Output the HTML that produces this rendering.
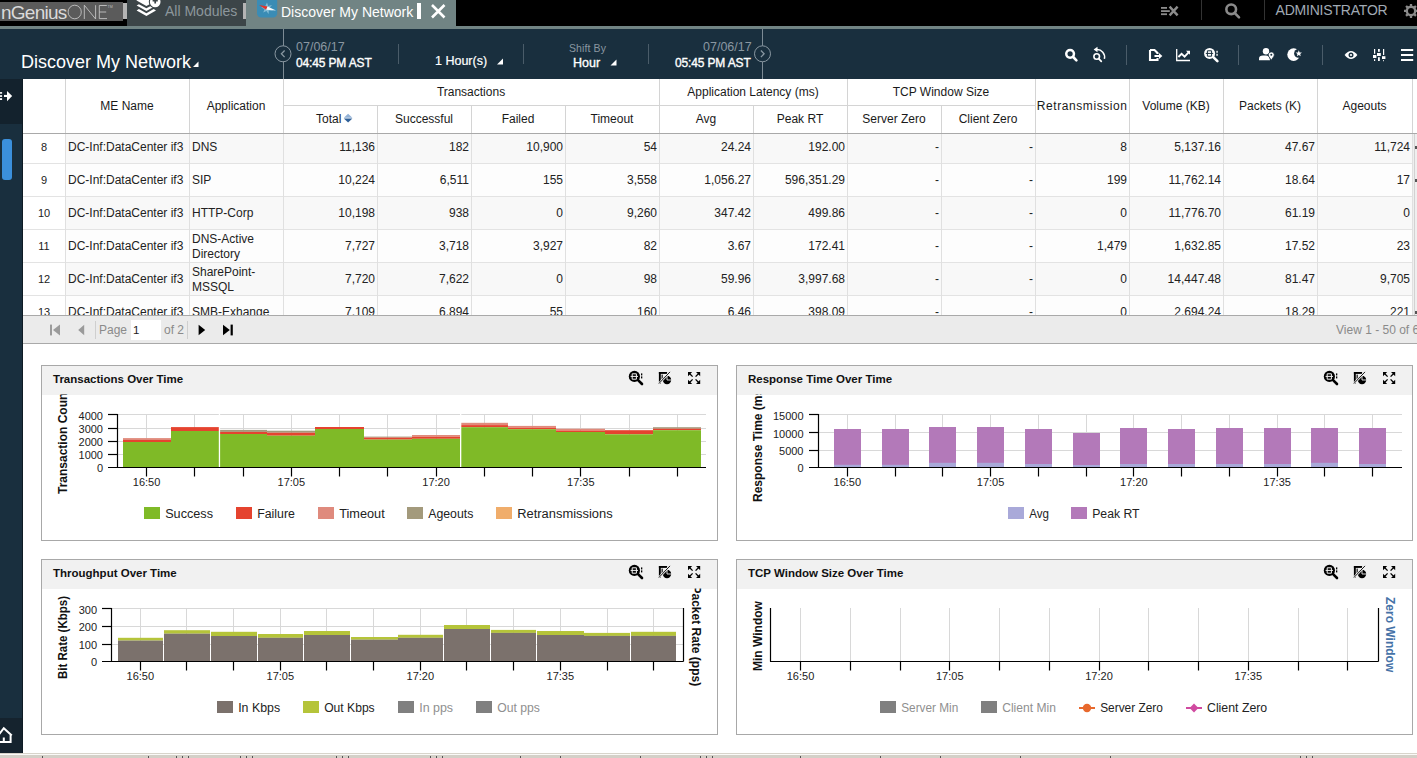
<!DOCTYPE html>
<html><head><meta charset="utf-8"><title>Discover My Network</title><style>
*{box-sizing:border-box}
html,body{margin:0;padding:0}
body{width:1417px;height:758px;overflow:hidden;position:relative;background:#fff;font-family:"Liberation Sans",sans-serif;color:#222}
.a{position:absolute;white-space:nowrap}
.w{color:#fff}
.panel{position:absolute;border:1px solid #a8a8a8;background:#fff}
.ph{position:absolute;left:0;top:0;right:0;height:29px;background:#f1f1f1}
.pt{position:absolute;left:11px;top:7px;font-size:11.5px;font-weight:bold;color:#111;white-space:nowrap}
svg{position:absolute;left:0;top:0;overflow:visible}
</style></head><body>
<div class="a" style="left:0px;top:0px;width:1417px;height:26px;background:#000;"></div>
<div class="a" style="left:0px;top:26px;width:1417px;height:3px;background:#718484;"></div>
<div class="a" style="left:0px;top:29px;width:1417px;height:50px;background:#192f3e;"></div>
<div class="a" style="left:0px;top:2px;width:123px;height:19px;background:#5b5b5b;"></div>
<div class="a" style="left:1px;top:2px;font-size:19px;color:#dadada;letter-spacing:-0.75px">nGenius</div>
<div class="a" style="left:123px;top:3px;width:4px;height:16px;background:#b4b4b4;"></div>
<div class="a" style="left:127px;top:0px;width:119px;height:26px;background:#3c4548;"></div>
<div class="a" style="left:165px;top:3px;font-size:14px;color:#8d979c;">All Modules</div>
<div class="a" style="left:243px;top:3px;width:4px;height:16px;background:#b4b4b4;"></div>
<div class="a" style="left:246px;top:0px;width:210px;height:26px;background:#718484;"></div>
<div class="a" style="left:281px;top:4px;font-size:14px;color:#fff;">Discover My Network</div>
<div class="a" style="left:417px;top:3px;width:4px;height:16px;background:#fff;"></div>
<div class="a" style="left:1201px;top:0px;width:1px;height:20px;background:#333;"></div>
<div class="a" style="left:1264px;top:0px;width:1px;height:20px;background:#333;"></div>
<div class="a" style="left:1275.5px;top:1.8px;font-size:14px;color:#a0aab4;letter-spacing:-0.2px">ADMINISTRATOR</div>
<div class="a" style="left:21px;top:51.7px;font-size:18px;color:#fff;">Discover My Network</div>
<div class="a" style="left:283px;top:29px;width:1px;height:50px;background:#7d8b95;"></div>
<div class="a" style="left:762px;top:29px;width:1px;height:50px;background:#7d8b95;"></div>
<div class="a" style="left:296px;top:40px;font-size:12.5px;color:#8a97a1;">07/06/17</div>
<div class="a" style="left:296px;top:55.5px;font-size:12px;color:#fff;-webkit-text-stroke:0.35px #fff;letter-spacing:-0.15px">04:45 PM AST</div>
<div class="a" style="left:398px;top:44px;width:1px;height:20px;background:#4a5c69;"></div>
<div class="a" style="left:435px;top:53.5px;font-size:12.5px;color:#fff;-webkit-text-stroke:0.2px #fff">1 Hour(s)</div>
<div class="a" style="left:523px;top:44px;width:1px;height:20px;background:#4a5c69;"></div>
<div class="a" style="left:569px;top:41.5px;font-size:10.5px;color:#8a97a1;letter-spacing:0.1px">Shift By</div>
<div class="a" style="left:573px;top:55.5px;font-size:12.5px;color:#fff;-webkit-text-stroke:0.35px #fff">Hour</div>
<div class="a" style="left:648px;top:44px;width:1px;height:20px;background:#4a5c69;"></div>
<div class="a" style="left:703px;top:40px;font-size:12.5px;color:#8a97a1;">07/06/17</div>
<div class="a" style="left:675px;top:55.5px;font-size:12px;color:#fff;-webkit-text-stroke:0.35px #fff;letter-spacing:-0.15px">05:45 PM AST</div>
<div class="a" style="left:1126px;top:45px;width:1px;height:20px;background:#4a5c69;"></div>
<div class="a" style="left:1238px;top:45px;width:1px;height:20px;background:#4a5c69;"></div>
<div class="a" style="left:1322px;top:45px;width:1px;height:20px;background:#4a5c69;"></div>
<div class="a" style="left:0px;top:79px;width:23px;height:674px;background:#192f3e;"></div>
<div class="a" style="left:0px;top:79px;width:23px;height:45px;background:#13222d;"></div>
<div class="a" style="left:2px;top:139px;width:10px;height:41px;background:#3b90dc;border-radius:3px"></div>
<div class="a" style="left:0px;top:718px;width:23px;height:35px;background:#15232e;"></div>
<div class="a" style="left:22px;top:79px;width:1px;height:674px;background:#0e1b24;"></div>
<div class="a" style="left:23px;top:79px;width:1394px;height:236px;background:#fff;"></div>
<div class="a" style="left:23px;top:133px;width:1394px;height:182px;overflow:hidden">
<div class="a" style="left:42px;top:-2px;width:1352px;height:33px;background:#f8f8f8"></div>
<div class="a" style="left:0;top:30px;width:1389px;height:1px;background:#e3e3e3"></div>
<div class="a" style="left:0;top:7.7px;width:42px;text-align:center;font-size:11px;color:#222">8</div>
<div class="a" style="left:45px;top:7.0px;font-size:12px;color:#222">DC-Inf:DataCenter if3</div>
<div class="a" style="left:169px;top:7.0px;font-size:12px;color:#222">DNS</div>
<div class="a" style="right:1042px;top:7.0px;font-size:12px;color:#222">11,136</div>
<div class="a" style="right:948px;top:7.0px;font-size:12px;color:#222">182</div>
<div class="a" style="right:854px;top:7.0px;font-size:12px;color:#222">10,900</div>
<div class="a" style="right:760px;top:7.0px;font-size:12px;color:#222">54</div>
<div class="a" style="right:666px;top:7.0px;font-size:12px;color:#222">24.24</div>
<div class="a" style="right:572px;top:7.0px;font-size:12px;color:#222">192.00</div>
<div class="a" style="right:478px;top:7.0px;font-size:12px;color:#222">-</div>
<div class="a" style="right:384px;top:7.0px;font-size:12px;color:#222">-</div>
<div class="a" style="right:290px;top:7.0px;font-size:12px;color:#222">8</div>
<div class="a" style="right:196px;top:7.0px;font-size:12px;color:#222">5,137.16</div>
<div class="a" style="right:102px;top:7.0px;font-size:12px;color:#222">47.67</div>
<div class="a" style="right:7px;top:7.0px;font-size:12px;color:#222">11,724</div>
<div class="a" style="left:42px;top:31px;width:1352px;height:33px;background:#fdfdfd"></div>
<div class="a" style="left:0;top:63px;width:1389px;height:1px;background:#e3e3e3"></div>
<div class="a" style="left:0;top:40.7px;width:42px;text-align:center;font-size:11px;color:#222">9</div>
<div class="a" style="left:45px;top:40.0px;font-size:12px;color:#222">DC-Inf:DataCenter if3</div>
<div class="a" style="left:169px;top:40.0px;font-size:12px;color:#222">SIP</div>
<div class="a" style="right:1042px;top:40.0px;font-size:12px;color:#222">10,224</div>
<div class="a" style="right:948px;top:40.0px;font-size:12px;color:#222">6,511</div>
<div class="a" style="right:854px;top:40.0px;font-size:12px;color:#222">155</div>
<div class="a" style="right:760px;top:40.0px;font-size:12px;color:#222">3,558</div>
<div class="a" style="right:666px;top:40.0px;font-size:12px;color:#222">1,056.27</div>
<div class="a" style="right:572px;top:40.0px;font-size:12px;color:#222">596,351.29</div>
<div class="a" style="right:478px;top:40.0px;font-size:12px;color:#222">-</div>
<div class="a" style="right:384px;top:40.0px;font-size:12px;color:#222">-</div>
<div class="a" style="right:290px;top:40.0px;font-size:12px;color:#222">199</div>
<div class="a" style="right:196px;top:40.0px;font-size:12px;color:#222">11,762.14</div>
<div class="a" style="right:102px;top:40.0px;font-size:12px;color:#222">18.64</div>
<div class="a" style="right:7px;top:40.0px;font-size:12px;color:#222">17</div>
<div class="a" style="left:42px;top:64px;width:1352px;height:33px;background:#f8f8f8"></div>
<div class="a" style="left:0;top:96px;width:1389px;height:1px;background:#e3e3e3"></div>
<div class="a" style="left:0;top:73.7px;width:42px;text-align:center;font-size:11px;color:#222">10</div>
<div class="a" style="left:45px;top:73.0px;font-size:12px;color:#222">DC-Inf:DataCenter if3</div>
<div class="a" style="left:169px;top:73.0px;font-size:12px;color:#222">HTTP-Corp</div>
<div class="a" style="right:1042px;top:73.0px;font-size:12px;color:#222">10,198</div>
<div class="a" style="right:948px;top:73.0px;font-size:12px;color:#222">938</div>
<div class="a" style="right:854px;top:73.0px;font-size:12px;color:#222">0</div>
<div class="a" style="right:760px;top:73.0px;font-size:12px;color:#222">9,260</div>
<div class="a" style="right:666px;top:73.0px;font-size:12px;color:#222">347.42</div>
<div class="a" style="right:572px;top:73.0px;font-size:12px;color:#222">499.86</div>
<div class="a" style="right:478px;top:73.0px;font-size:12px;color:#222">-</div>
<div class="a" style="right:384px;top:73.0px;font-size:12px;color:#222">-</div>
<div class="a" style="right:290px;top:73.0px;font-size:12px;color:#222">0</div>
<div class="a" style="right:196px;top:73.0px;font-size:12px;color:#222">11,776.70</div>
<div class="a" style="right:102px;top:73.0px;font-size:12px;color:#222">61.19</div>
<div class="a" style="right:7px;top:73.0px;font-size:12px;color:#222">0</div>
<div class="a" style="left:42px;top:97px;width:1352px;height:33px;background:#fdfdfd"></div>
<div class="a" style="left:0;top:129px;width:1389px;height:1px;background:#e3e3e3"></div>
<div class="a" style="left:0;top:106.7px;width:42px;text-align:center;font-size:11px;color:#222">11</div>
<div class="a" style="left:45px;top:106.0px;font-size:12px;color:#222">DC-Inf:DataCenter if3</div>
<div class="a" style="left:169px;top:98.5px;font-size:12px;line-height:15px;color:#222">DNS-Active<br>Directory</div>
<div class="a" style="right:1042px;top:106.0px;font-size:12px;color:#222">7,727</div>
<div class="a" style="right:948px;top:106.0px;font-size:12px;color:#222">3,718</div>
<div class="a" style="right:854px;top:106.0px;font-size:12px;color:#222">3,927</div>
<div class="a" style="right:760px;top:106.0px;font-size:12px;color:#222">82</div>
<div class="a" style="right:666px;top:106.0px;font-size:12px;color:#222">3.67</div>
<div class="a" style="right:572px;top:106.0px;font-size:12px;color:#222">172.41</div>
<div class="a" style="right:478px;top:106.0px;font-size:12px;color:#222">-</div>
<div class="a" style="right:384px;top:106.0px;font-size:12px;color:#222">-</div>
<div class="a" style="right:290px;top:106.0px;font-size:12px;color:#222">1,479</div>
<div class="a" style="right:196px;top:106.0px;font-size:12px;color:#222">1,632.85</div>
<div class="a" style="right:102px;top:106.0px;font-size:12px;color:#222">17.52</div>
<div class="a" style="right:7px;top:106.0px;font-size:12px;color:#222">23</div>
<div class="a" style="left:42px;top:130px;width:1352px;height:33px;background:#f8f8f8"></div>
<div class="a" style="left:0;top:162px;width:1389px;height:1px;background:#e3e3e3"></div>
<div class="a" style="left:0;top:139.7px;width:42px;text-align:center;font-size:11px;color:#222">12</div>
<div class="a" style="left:45px;top:139.0px;font-size:12px;color:#222">DC-Inf:DataCenter if3</div>
<div class="a" style="left:169px;top:131.5px;font-size:12px;line-height:15px;color:#222">SharePoint-<br>MSSQL</div>
<div class="a" style="right:1042px;top:139.0px;font-size:12px;color:#222">7,720</div>
<div class="a" style="right:948px;top:139.0px;font-size:12px;color:#222">7,622</div>
<div class="a" style="right:854px;top:139.0px;font-size:12px;color:#222">0</div>
<div class="a" style="right:760px;top:139.0px;font-size:12px;color:#222">98</div>
<div class="a" style="right:666px;top:139.0px;font-size:12px;color:#222">59.96</div>
<div class="a" style="right:572px;top:139.0px;font-size:12px;color:#222">3,997.68</div>
<div class="a" style="right:478px;top:139.0px;font-size:12px;color:#222">-</div>
<div class="a" style="right:384px;top:139.0px;font-size:12px;color:#222">-</div>
<div class="a" style="right:290px;top:139.0px;font-size:12px;color:#222">0</div>
<div class="a" style="right:196px;top:139.0px;font-size:12px;color:#222">14,447.48</div>
<div class="a" style="right:102px;top:139.0px;font-size:12px;color:#222">81.47</div>
<div class="a" style="right:7px;top:139.0px;font-size:12px;color:#222">9,705</div>
<div class="a" style="left:42px;top:163px;width:1352px;height:33px;background:#fdfdfd"></div>
<div class="a" style="left:0;top:195px;width:1389px;height:1px;background:#e3e3e3"></div>
<div class="a" style="left:0;top:172.7px;width:42px;text-align:center;font-size:11px;color:#222">13</div>
<div class="a" style="left:45px;top:172.0px;font-size:12px;color:#222">DC-Inf:DataCenter if3</div>
<div class="a" style="left:169px;top:172.0px;font-size:12px;color:#222">SMB-Exhange</div>
<div class="a" style="right:1042px;top:172.0px;font-size:12px;color:#222">7,109</div>
<div class="a" style="right:948px;top:172.0px;font-size:12px;color:#222">6,894</div>
<div class="a" style="right:854px;top:172.0px;font-size:12px;color:#222">55</div>
<div class="a" style="right:760px;top:172.0px;font-size:12px;color:#222">160</div>
<div class="a" style="right:666px;top:172.0px;font-size:12px;color:#222">6.46</div>
<div class="a" style="right:572px;top:172.0px;font-size:12px;color:#222">398.09</div>
<div class="a" style="right:478px;top:172.0px;font-size:12px;color:#222">-</div>
<div class="a" style="right:384px;top:172.0px;font-size:12px;color:#222">-</div>
<div class="a" style="right:290px;top:172.0px;font-size:12px;color:#222">0</div>
<div class="a" style="right:196px;top:172.0px;font-size:12px;color:#222">2,694.24</div>
<div class="a" style="right:102px;top:172.0px;font-size:12px;color:#222">18.29</div>
<div class="a" style="right:7px;top:172.0px;font-size:12px;color:#222">221</div>
</div>
<div class="a" style="left:65px;top:133px;width:1px;height:182px;background:#e0e0e0;"></div>
<div class="a" style="left:189px;top:133px;width:1px;height:182px;background:#e0e0e0;"></div>
<div class="a" style="left:283px;top:133px;width:1px;height:182px;background:#e0e0e0;"></div>
<div class="a" style="left:377px;top:133px;width:1px;height:182px;background:#e0e0e0;"></div>
<div class="a" style="left:471px;top:133px;width:1px;height:182px;background:#e0e0e0;"></div>
<div class="a" style="left:565px;top:133px;width:1px;height:182px;background:#e0e0e0;"></div>
<div class="a" style="left:659px;top:133px;width:1px;height:182px;background:#e0e0e0;"></div>
<div class="a" style="left:753px;top:133px;width:1px;height:182px;background:#e0e0e0;"></div>
<div class="a" style="left:847px;top:133px;width:1px;height:182px;background:#e0e0e0;"></div>
<div class="a" style="left:941px;top:133px;width:1px;height:182px;background:#e0e0e0;"></div>
<div class="a" style="left:1035px;top:133px;width:1px;height:182px;background:#e0e0e0;"></div>
<div class="a" style="left:1129px;top:133px;width:1px;height:182px;background:#e0e0e0;"></div>
<div class="a" style="left:1223px;top:133px;width:1px;height:182px;background:#e0e0e0;"></div>
<div class="a" style="left:1317px;top:133px;width:1px;height:182px;background:#e0e0e0;"></div>
<div class="a" style="left:1412px;top:133px;width:1px;height:182px;background:#e0e0e0;"></div>
<div class="a" style="left:65px;top:79px;width:1px;height:54px;background:#d4d4d4;"></div>
<div class="a" style="left:189px;top:79px;width:1px;height:54px;background:#d4d4d4;"></div>
<div class="a" style="left:283px;top:79px;width:1px;height:54px;background:#d4d4d4;"></div>
<div class="a" style="left:1035px;top:79px;width:1px;height:54px;background:#d4d4d4;"></div>
<div class="a" style="left:1129px;top:79px;width:1px;height:54px;background:#d4d4d4;"></div>
<div class="a" style="left:1223px;top:79px;width:1px;height:54px;background:#d4d4d4;"></div>
<div class="a" style="left:1317px;top:79px;width:1px;height:54px;background:#d4d4d4;"></div>
<div class="a" style="left:1412px;top:79px;width:1px;height:54px;background:#d4d4d4;"></div>
<div class="a" style="left:377px;top:105px;width:1px;height:28px;background:#d4d4d4;"></div>
<div class="a" style="left:471px;top:105px;width:1px;height:28px;background:#d4d4d4;"></div>
<div class="a" style="left:565px;top:105px;width:1px;height:28px;background:#d4d4d4;"></div>
<div class="a" style="left:753px;top:105px;width:1px;height:28px;background:#d4d4d4;"></div>
<div class="a" style="left:941px;top:105px;width:1px;height:28px;background:#d4d4d4;"></div>
<div class="a" style="left:659px;top:79px;width:1px;height:54px;background:#d4d4d4;"></div>
<div class="a" style="left:847px;top:79px;width:1px;height:54px;background:#d4d4d4;"></div>
<div class="a" style="left:283px;top:105px;width:752px;height:1px;background:#d4d4d4;"></div>
<div class="a" style="left:23px;top:133px;width:1394px;height:1px;background:#a9a9a9;"></div>
<div class="a" style="left:65px;top:98.5px;width:124px;text-align:center;font-size:12px;color:#1a1a1a">ME Name</div>
<div class="a" style="left:189px;top:98.5px;width:94px;text-align:center;font-size:12px;color:#1a1a1a">Application</div>
<div class="a" style="left:283px;top:84.5px;width:376px;text-align:center;font-size:12px;color:#1a1a1a">Transactions</div>
<div class="a" style="left:659px;top:84.5px;width:188px;text-align:center;font-size:12px;color:#1a1a1a">Application Latency (ms)</div>
<div class="a" style="left:847px;top:84.5px;width:188px;text-align:center;font-size:12px;color:#1a1a1a">TCP Window Size</div>
<div class="a" style="left:316px;top:111.5px;font-size:12px;color:#1a1a1a">Total</div>
<div class="a" style="left:377px;top:111.5px;width:94px;text-align:center;font-size:12px;color:#1a1a1a">Successful</div>
<div class="a" style="left:471px;top:111.5px;width:94px;text-align:center;font-size:12px;color:#1a1a1a">Failed</div>
<div class="a" style="left:565px;top:111.5px;width:94px;text-align:center;font-size:12px;color:#1a1a1a">Timeout</div>
<div class="a" style="left:659px;top:111.5px;width:94px;text-align:center;font-size:12px;color:#1a1a1a">Avg</div>
<div class="a" style="left:753px;top:111.5px;width:94px;text-align:center;font-size:12px;color:#1a1a1a">Peak RT</div>
<div class="a" style="left:847px;top:111.5px;width:94px;text-align:center;font-size:12px;color:#1a1a1a">Server Zero</div>
<div class="a" style="left:941px;top:111.5px;width:94px;text-align:center;font-size:12px;color:#1a1a1a">Client Zero</div>
<div class="a" style="left:1036.8px;top:98.5px;font-size:12px;color:#1a1a1a;letter-spacing:0.58px">Retransmission</div>
<div class="a" style="left:1129px;top:98.5px;width:94px;text-align:center;font-size:12px;color:#1a1a1a">Volume (KB)</div>
<div class="a" style="left:1223px;top:98.5px;width:94px;text-align:center;font-size:12px;color:#1a1a1a">Packets (K)</div>
<div class="a" style="left:1317px;top:98.5px;width:95px;text-align:center;font-size:12px;color:#1a1a1a">Ageouts</div>
<div class="a" style="left:1413px;top:134px;width:4px;height:181px;background:#efefef;"></div>
<div class="a" style="left:1414px;top:134px;width:1px;height:181px;background:#d2d2d2;"></div>
<div class="a" style="left:1415px;top:146px;width:2px;height:3px;background:#555;"></div>
<div class="a" style="left:1415px;top:179px;width:2px;height:3px;background:#555;"></div>
<div class="a" style="left:1415px;top:311px;width:2px;height:3px;background:#555;"></div>
<div class="a" style="left:23px;top:315px;width:1394px;height:29px;background:#ebebeb;"></div>
<div class="a" style="left:23px;top:315px;width:1394px;height:1px;background:#a9a9a9;"></div>
<div class="a" style="left:23px;top:343px;width:1394px;height:1px;background:#a9a9a9;"></div>
<div class="a" style="left:95px;top:321px;width:1px;height:18px;background:#cfcfcf;"></div>
<div class="a" style="left:187px;top:321px;width:1px;height:18px;background:#cfcfcf;"></div>
<div class="a" style="left:99px;top:323px;font-size:12px;color:#8a8a8a;">Page</div>
<div class="a" style="left:131px;top:320px;width:30px;height:20px;background:#fff;"></div>
<div class="a" style="left:133px;top:324px;font-size:11.5px;color:#222;">1</div>
<div class="a" style="left:164px;top:323px;font-size:12px;color:#8a8a8a;">of 2</div>
<div class="a" style="left:1336px;top:323px;font-size:12px;color:#8a8a8a;">View 1 - 50 of 60</div>
<div class="panel" style="left:41px;top:365px;width:677px;height:176px"><div class="ph"></div><div class="pt">Transactions Over Time</div></div>
<div class="panel" style="left:736px;top:365px;width:677px;height:176px"><div class="ph"></div><div class="pt">Response Time Over Time</div></div>
<div class="panel" style="left:41px;top:559px;width:677px;height:176px"><div class="ph"></div><div class="pt">Throughput Over Time</div></div>
<div class="panel" style="left:736px;top:559px;width:677px;height:176px"><div class="ph"></div><div class="pt">TCP Window Size Over Time</div></div>
<div class="a" style="left:0px;top:753px;width:1417px;height:1px;background:#d8d4cb;"></div>
<div class="a" style="left:0px;top:754px;width:1417px;height:1px;background:#fbfaf8;"></div>
<div class="a" style="left:0px;top:755px;width:1417px;height:3px;background:#d4d0c8;"></div>
<div class="a" style="left:42px;top:756px;width:1px;height:2px;background:#555;"></div>
<div class="a" style="left:148px;top:756px;width:1px;height:2px;background:#555;"></div>
<div class="a" style="left:176px;top:756px;width:1px;height:2px;background:#555;"></div>
<div class="a" style="left:182px;top:756px;width:1px;height:2px;background:#555;"></div>
<div class="a" style="left:188px;top:756px;width:1px;height:2px;background:#555;"></div>
<div class="a" style="left:240px;top:756px;width:1px;height:2px;background:#555;"></div>
<div class="a" style="left:246px;top:756px;width:1px;height:2px;background:#555;"></div>
<div class="a" style="left:252px;top:756px;width:1px;height:2px;background:#555;"></div>
<div class="a" style="left:336px;top:756px;width:1px;height:2px;background:#555;"></div>
<div class="a" style="left:342px;top:756px;width:1px;height:2px;background:#555;"></div>
<div class="a" style="left:348px;top:756px;width:1px;height:2px;background:#555;"></div>
<div class="a" style="left:430px;top:756px;width:1px;height:2px;background:#555;"></div>
<div class="a" style="left:436px;top:756px;width:1px;height:2px;background:#555;"></div>
<div class="a" style="left:442px;top:756px;width:1px;height:2px;background:#555;"></div>
<div class="a" style="left:520px;top:756px;width:1px;height:2px;background:#555;"></div>
<div class="a" style="left:560px;top:756px;width:1px;height:2px;background:#555;"></div>
<div class="a" style="left:640px;top:756px;width:1px;height:2px;background:#555;"></div>
<div class="a" style="left:700px;top:756px;width:1px;height:2px;background:#555;"></div>
<div class="a" style="left:706px;top:756px;width:1px;height:2px;background:#555;"></div>
<div class="a" style="left:712px;top:756px;width:1px;height:2px;background:#555;"></div>
<div class="a" style="left:800px;top:756px;width:1px;height:2px;background:#555;"></div>
<div class="a" style="left:880px;top:756px;width:1px;height:2px;background:#555;"></div>
<div class="a" style="left:940px;top:756px;width:1px;height:2px;background:#555;"></div>
<div class="a" style="left:1020px;top:756px;width:1px;height:2px;background:#555;"></div>
<div class="a" style="left:1110px;top:756px;width:1px;height:2px;background:#555;"></div>
<div class="a" style="left:1300px;top:756px;width:1px;height:2px;background:#555;"></div>
<div class="a" style="left:1306px;top:756px;width:1px;height:2px;background:#555;"></div>
<div class="a" style="left:1312px;top:756px;width:1px;height:2px;background:#555;"></div>
<svg width="1417" height="758" viewBox="0 0 1417 758" style="font-family:'Liberation Sans',sans-serif">
<defs><clipPath id="c1"><rect x="0" y="394.5" width="1417" height="150"/></clipPath><clipPath id="c3"><rect x="0" y="588.5" width="1417" height="150"/></clipPath></defs>
<line x1="117" y1="414.5" x2="706" y2="414.5" stroke="#d8d8d8" stroke-width="1"/>
<line x1="117" y1="428.5" x2="706" y2="428.5" stroke="#d8d8d8" stroke-width="1"/>
<line x1="117" y1="441.5" x2="706" y2="441.5" stroke="#d8d8d8" stroke-width="1"/>
<line x1="117" y1="454.5" x2="706" y2="454.5" stroke="#d8d8d8" stroke-width="1"/>
<line x1="146.5" y1="414" x2="146.5" y2="467" stroke="#d8d8d8" stroke-width="1"/>
<line x1="194.5" y1="414" x2="194.5" y2="467" stroke="#d8d8d8" stroke-width="1"/>
<line x1="243.5" y1="414" x2="243.5" y2="467" stroke="#d8d8d8" stroke-width="1"/>
<line x1="291.5" y1="414" x2="291.5" y2="467" stroke="#d8d8d8" stroke-width="1"/>
<line x1="339.5" y1="414" x2="339.5" y2="467" stroke="#d8d8d8" stroke-width="1"/>
<line x1="387.5" y1="414" x2="387.5" y2="467" stroke="#d8d8d8" stroke-width="1"/>
<line x1="436.5" y1="414" x2="436.5" y2="467" stroke="#d8d8d8" stroke-width="1"/>
<line x1="484.5" y1="414" x2="484.5" y2="467" stroke="#d8d8d8" stroke-width="1"/>
<line x1="532.5" y1="414" x2="532.5" y2="467" stroke="#d8d8d8" stroke-width="1"/>
<line x1="580.5" y1="414" x2="580.5" y2="467" stroke="#d8d8d8" stroke-width="1"/>
<line x1="629.5" y1="414" x2="629.5" y2="467" stroke="#d8d8d8" stroke-width="1"/>
<line x1="677.5" y1="414" x2="677.5" y2="467" stroke="#d8d8d8" stroke-width="1"/>
<rect x="123" y="438.10" width="48" height="1.90" fill="#e08a7c"/>
<rect x="123" y="440.00" width="48" height="2.00" fill="#e5432f"/>
<rect x="123" y="442.00" width="48" height="25.00" fill="#7fba27"/>
<rect x="171" y="427.10" width="48" height="3.90" fill="#e5432f"/>
<rect x="171" y="431.00" width="48" height="36.00" fill="#7fba27"/>
<rect x="219" y="429.90" width="48" height="2.00" fill="#a39a7c"/>
<rect x="219" y="431.90" width="48" height="2.10" fill="#e5432f"/>
<rect x="219" y="434.00" width="48" height="33.00" fill="#7fba27"/>
<rect x="267" y="430.70" width="48" height="2.00" fill="#a39a7c"/>
<rect x="267" y="432.70" width="48" height="3.00" fill="#e5432f"/>
<rect x="267" y="435.70" width="48" height="31.30" fill="#7fba27"/>
<rect x="315" y="427.00" width="49" height="2.00" fill="#e5432f"/>
<rect x="315" y="429.00" width="49" height="38.00" fill="#7fba27"/>
<rect x="364" y="436.60" width="48" height="1.00" fill="#a39a7c"/>
<rect x="364" y="437.60" width="48" height="2.00" fill="#e5432f"/>
<rect x="364" y="439.60" width="48" height="27.40" fill="#7fba27"/>
<rect x="412" y="435.00" width="48" height="1.80" fill="#e08a7c"/>
<rect x="412" y="436.80" width="48" height="2.00" fill="#e5432f"/>
<rect x="412" y="438.80" width="48" height="28.20" fill="#7fba27"/>
<rect x="460" y="422.80" width="48" height="2.30" fill="#e08a7c"/>
<rect x="460" y="425.10" width="48" height="2.10" fill="#e5432f"/>
<rect x="460" y="427.20" width="48" height="39.80" fill="#7fba27"/>
<rect x="508" y="425.90" width="48" height="1.80" fill="#e08a7c"/>
<rect x="508" y="427.70" width="48" height="1.50" fill="#e5432f"/>
<rect x="508" y="429.20" width="48" height="37.80" fill="#7fba27"/>
<rect x="556" y="428.70" width="49" height="1.80" fill="#e08a7c"/>
<rect x="556" y="430.50" width="49" height="1.50" fill="#e5432f"/>
<rect x="556" y="432.00" width="49" height="35.00" fill="#7fba27"/>
<rect x="605" y="430.20" width="48" height="4.10" fill="#e5432f"/>
<rect x="605" y="434.30" width="48" height="32.70" fill="#7fba27"/>
<rect x="653" y="427.20" width="48" height="1.50" fill="#a39a7c"/>
<rect x="653" y="428.70" width="48" height="1.50" fill="#e5432f"/>
<rect x="653" y="430.20" width="48" height="36.80" fill="#7fba27"/>
<rect x="218.80" y="414.00" width="1.30" height="53.00" fill="#fff"/>
<rect x="460.00" y="414.00" width="1.30" height="53.00" fill="#fff"/>
<line x1="117.5" y1="414" x2="117.5" y2="467.5" stroke="#000" stroke-width="1.2"/>
<line x1="108" y1="467.5" x2="706" y2="467.5" stroke="#000" stroke-width="1.2"/>
<line x1="108" y1="414.5" x2="117.5" y2="414.5" stroke="#000" stroke-width="1.2"/>
<line x1="108" y1="428.5" x2="117.5" y2="428.5" stroke="#000" stroke-width="1.2"/>
<line x1="108" y1="441.5" x2="117.5" y2="441.5" stroke="#000" stroke-width="1.2"/>
<line x1="108" y1="454.5" x2="117.5" y2="454.5" stroke="#000" stroke-width="1.2"/>
<line x1="146.5" y1="467" x2="146.5" y2="476.5" stroke="#000" stroke-width="1.2"/>
<line x1="194.5" y1="467" x2="194.5" y2="476.5" stroke="#000" stroke-width="1.2"/>
<line x1="243.5" y1="467" x2="243.5" y2="476.5" stroke="#000" stroke-width="1.2"/>
<line x1="291.5" y1="467" x2="291.5" y2="476.5" stroke="#000" stroke-width="1.2"/>
<line x1="339.5" y1="467" x2="339.5" y2="476.5" stroke="#000" stroke-width="1.2"/>
<line x1="387.5" y1="467" x2="387.5" y2="476.5" stroke="#000" stroke-width="1.2"/>
<line x1="436.5" y1="467" x2="436.5" y2="476.5" stroke="#000" stroke-width="1.2"/>
<line x1="484.5" y1="467" x2="484.5" y2="476.5" stroke="#000" stroke-width="1.2"/>
<line x1="532.5" y1="467" x2="532.5" y2="476.5" stroke="#000" stroke-width="1.2"/>
<line x1="580.5" y1="467" x2="580.5" y2="476.5" stroke="#000" stroke-width="1.2"/>
<line x1="629.5" y1="467" x2="629.5" y2="476.5" stroke="#000" stroke-width="1.2"/>
<line x1="677.5" y1="467" x2="677.5" y2="476.5" stroke="#000" stroke-width="1.2"/>
<text x="103" y="420" font-size="11" text-anchor="end" fill="#222" >4000</text>
<text x="103" y="433" font-size="11" text-anchor="end" fill="#222" >3000</text>
<text x="103" y="446" font-size="11" text-anchor="end" fill="#222" >2000</text>
<text x="103" y="459" font-size="11" text-anchor="end" fill="#222" >1000</text>
<text x="103" y="471.5" font-size="11" text-anchor="end" fill="#222" >0</text>
<text x="146.6" y="486" font-size="11" text-anchor="middle" fill="#222" >16:50</text>
<text x="291.35" y="486" font-size="11" text-anchor="middle" fill="#222" >17:05</text>
<text x="436.1" y="486" font-size="11" text-anchor="middle" fill="#222" >17:20</text>
<text x="580.85" y="486" font-size="11" text-anchor="middle" fill="#222" >17:35</text>
<g clip-path="url(#c1)"><text transform="translate(66.5,494) rotate(-90)" font-size="12" font-weight="bold" fill="#111">Transaction Count</text></g>
<rect x="144.00" y="507.00" width="16.00" height="12.00" fill="#7fba27"/>
<text x="165.2" y="518" font-size="12.5" text-anchor="start" fill="#222" textLength="47.8" lengthAdjust="spacingAndGlyphs">Success</text>
<rect x="236.00" y="507.00" width="16.00" height="12.00" fill="#e5432f"/>
<text x="257.2" y="518" font-size="12.5" text-anchor="start" fill="#222" textLength="37.699999999999996" lengthAdjust="spacingAndGlyphs">Failure</text>
<rect x="318.00" y="507.00" width="16.00" height="12.00" fill="#df8a7d"/>
<text x="339.2" y="518" font-size="12.5" text-anchor="start" fill="#222" textLength="45.5" lengthAdjust="spacingAndGlyphs">Timeout</text>
<rect x="407.00" y="507.00" width="16.00" height="12.00" fill="#a39a7c"/>
<text x="428.2" y="518" font-size="12.5" text-anchor="start" fill="#222" textLength="45.1" lengthAdjust="spacingAndGlyphs">Ageouts</text>
<rect x="496.00" y="507.00" width="16.00" height="12.00" fill="#f0ad6b"/>
<text x="517.2" y="518" font-size="12.5" text-anchor="start" fill="#222" textLength="95.4" lengthAdjust="spacingAndGlyphs">Retransmissions</text>
<line x1="818" y1="414.5" x2="1402" y2="414.5" stroke="#d8d8d8" stroke-width="1"/>
<line x1="818" y1="432.5" x2="1402" y2="432.5" stroke="#d8d8d8" stroke-width="1"/>
<line x1="818" y1="450.5" x2="1402" y2="450.5" stroke="#d8d8d8" stroke-width="1"/>
<line x1="847.5" y1="414" x2="847.5" y2="467" stroke="#d8d8d8" stroke-width="1"/>
<line x1="895.5" y1="414" x2="895.5" y2="467" stroke="#d8d8d8" stroke-width="1"/>
<line x1="942.5" y1="414" x2="942.5" y2="467" stroke="#d8d8d8" stroke-width="1"/>
<line x1="990.5" y1="414" x2="990.5" y2="467" stroke="#d8d8d8" stroke-width="1"/>
<line x1="1038.5" y1="414" x2="1038.5" y2="467" stroke="#d8d8d8" stroke-width="1"/>
<line x1="1086.5" y1="414" x2="1086.5" y2="467" stroke="#d8d8d8" stroke-width="1"/>
<line x1="1133.5" y1="414" x2="1133.5" y2="467" stroke="#d8d8d8" stroke-width="1"/>
<line x1="1181.5" y1="414" x2="1181.5" y2="467" stroke="#d8d8d8" stroke-width="1"/>
<line x1="1229.5" y1="414" x2="1229.5" y2="467" stroke="#d8d8d8" stroke-width="1"/>
<line x1="1277.5" y1="414" x2="1277.5" y2="467" stroke="#d8d8d8" stroke-width="1"/>
<line x1="1324.5" y1="414" x2="1324.5" y2="467" stroke="#d8d8d8" stroke-width="1"/>
<line x1="1372.5" y1="414" x2="1372.5" y2="467" stroke="#d8d8d8" stroke-width="1"/>
<rect x="834" y="429.00" width="27" height="38.00" fill="#b379b9"/>
<rect x="834" y="464.80" width="27" height="2.20" fill="#a9a9d9"/>
<rect x="882" y="429.00" width="27" height="38.00" fill="#b379b9"/>
<rect x="882" y="464.80" width="27" height="2.20" fill="#a9a9d9"/>
<rect x="929" y="427.00" width="27" height="40.00" fill="#b379b9"/>
<rect x="929" y="462.80" width="27" height="4.20" fill="#a9a9d9"/>
<rect x="977" y="427.00" width="27" height="40.00" fill="#b379b9"/>
<rect x="977" y="462.80" width="27" height="4.20" fill="#a9a9d9"/>
<rect x="1025" y="429.00" width="27" height="38.00" fill="#b379b9"/>
<rect x="1025" y="464.00" width="27" height="3.00" fill="#a9a9d9"/>
<rect x="1073" y="433.00" width="27" height="34.00" fill="#b379b9"/>
<rect x="1073" y="465.00" width="27" height="2.00" fill="#a9a9d9"/>
<rect x="1120" y="428.00" width="27" height="39.00" fill="#b379b9"/>
<rect x="1120" y="464.00" width="27" height="3.00" fill="#a9a9d9"/>
<rect x="1168" y="429.00" width="27" height="38.00" fill="#b379b9"/>
<rect x="1168" y="464.00" width="27" height="3.00" fill="#a9a9d9"/>
<rect x="1216" y="428.00" width="27" height="39.00" fill="#b379b9"/>
<rect x="1216" y="464.00" width="27" height="3.00" fill="#a9a9d9"/>
<rect x="1264" y="428.00" width="27" height="39.00" fill="#b379b9"/>
<rect x="1264" y="464.00" width="27" height="3.00" fill="#a9a9d9"/>
<rect x="1311" y="428.00" width="27" height="39.00" fill="#b379b9"/>
<rect x="1311" y="462.80" width="27" height="4.20" fill="#a9a9d9"/>
<rect x="1359" y="428.00" width="27" height="39.00" fill="#b379b9"/>
<rect x="1359" y="464.00" width="27" height="3.00" fill="#a9a9d9"/>
<line x1="818.5" y1="414" x2="818.5" y2="467.5" stroke="#000" stroke-width="1.2"/>
<line x1="809" y1="467.5" x2="1402" y2="467.5" stroke="#000" stroke-width="1.2"/>
<line x1="809" y1="414.5" x2="818.5" y2="414.5" stroke="#000" stroke-width="1.2"/>
<line x1="809" y1="432.5" x2="818.5" y2="432.5" stroke="#000" stroke-width="1.2"/>
<line x1="809" y1="450.5" x2="818.5" y2="450.5" stroke="#000" stroke-width="1.2"/>
<line x1="847.5" y1="467" x2="847.5" y2="476.5" stroke="#000" stroke-width="1.2"/>
<line x1="895.5" y1="467" x2="895.5" y2="476.5" stroke="#000" stroke-width="1.2"/>
<line x1="942.5" y1="467" x2="942.5" y2="476.5" stroke="#000" stroke-width="1.2"/>
<line x1="990.5" y1="467" x2="990.5" y2="476.5" stroke="#000" stroke-width="1.2"/>
<line x1="1038.5" y1="467" x2="1038.5" y2="476.5" stroke="#000" stroke-width="1.2"/>
<line x1="1086.5" y1="467" x2="1086.5" y2="476.5" stroke="#000" stroke-width="1.2"/>
<line x1="1133.5" y1="467" x2="1133.5" y2="476.5" stroke="#000" stroke-width="1.2"/>
<line x1="1181.5" y1="467" x2="1181.5" y2="476.5" stroke="#000" stroke-width="1.2"/>
<line x1="1229.5" y1="467" x2="1229.5" y2="476.5" stroke="#000" stroke-width="1.2"/>
<line x1="1277.5" y1="467" x2="1277.5" y2="476.5" stroke="#000" stroke-width="1.2"/>
<line x1="1324.5" y1="467" x2="1324.5" y2="476.5" stroke="#000" stroke-width="1.2"/>
<line x1="1372.5" y1="467" x2="1372.5" y2="476.5" stroke="#000" stroke-width="1.2"/>
<text x="803.5" y="420" font-size="11" text-anchor="end" fill="#222" >15000</text>
<text x="803.5" y="437.5" font-size="11" text-anchor="end" fill="#222" >10000</text>
<text x="803.5" y="455" font-size="11" text-anchor="end" fill="#222" >5000</text>
<text x="803.5" y="471.5" font-size="11" text-anchor="end" fill="#222" >0</text>
<text x="847.3" y="486" font-size="11" text-anchor="middle" fill="#222" >16:50</text>
<text x="990.5799999999999" y="486" font-size="11" text-anchor="middle" fill="#222" >17:05</text>
<text x="1133.86" y="486" font-size="11" text-anchor="middle" fill="#222" >17:20</text>
<text x="1277.1399999999999" y="486" font-size="11" text-anchor="middle" fill="#222" >17:35</text>
<g clip-path="url(#c1)"><text transform="translate(761.5,502) rotate(-90)" font-size="12" font-weight="bold" fill="#111">Response Time (ms)</text></g>
<rect x="1008.00" y="507.00" width="16.00" height="12.00" fill="#a9a9d9"/>
<text x="1029.2" y="518" font-size="12.5" text-anchor="start" fill="#222" textLength="19.7" lengthAdjust="spacingAndGlyphs">Avg</text>
<rect x="1071.00" y="507.00" width="16.00" height="12.00" fill="#b379b9"/>
<text x="1092.2" y="518" font-size="12.5" text-anchor="start" fill="#222" textLength="47.4" lengthAdjust="spacingAndGlyphs">Peak RT</text>
<line x1="111" y1="608.5" x2="683" y2="608.5" stroke="#d8d8d8" stroke-width="1"/>
<line x1="111" y1="626.5" x2="683" y2="626.5" stroke="#d8d8d8" stroke-width="1"/>
<line x1="111" y1="644.5" x2="683" y2="644.5" stroke="#d8d8d8" stroke-width="1"/>
<line x1="140.5" y1="608" x2="140.5" y2="661" stroke="#d8d8d8" stroke-width="1"/>
<line x1="186.5" y1="608" x2="186.5" y2="661" stroke="#d8d8d8" stroke-width="1"/>
<line x1="233.5" y1="608" x2="233.5" y2="661" stroke="#d8d8d8" stroke-width="1"/>
<line x1="280.5" y1="608" x2="280.5" y2="661" stroke="#d8d8d8" stroke-width="1"/>
<line x1="326.5" y1="608" x2="326.5" y2="661" stroke="#d8d8d8" stroke-width="1"/>
<line x1="373.5" y1="608" x2="373.5" y2="661" stroke="#d8d8d8" stroke-width="1"/>
<line x1="420.5" y1="608" x2="420.5" y2="661" stroke="#d8d8d8" stroke-width="1"/>
<line x1="466.5" y1="608" x2="466.5" y2="661" stroke="#d8d8d8" stroke-width="1"/>
<line x1="513.5" y1="608" x2="513.5" y2="661" stroke="#d8d8d8" stroke-width="1"/>
<line x1="560.5" y1="608" x2="560.5" y2="661" stroke="#d8d8d8" stroke-width="1"/>
<line x1="607.5" y1="608" x2="607.5" y2="661" stroke="#d8d8d8" stroke-width="1"/>
<line x1="653.5" y1="608" x2="653.5" y2="661" stroke="#d8d8d8" stroke-width="1"/>
<rect x="118" y="637.80" width="45" height="2.80" fill="#b5c43a"/>
<rect x="118" y="640.60" width="45" height="20.40" fill="#7b716c"/>
<rect x="164" y="630.20" width="46" height="3.50" fill="#b5c43a"/>
<rect x="164" y="633.70" width="46" height="27.30" fill="#7b716c"/>
<rect x="211" y="631.80" width="46" height="4.20" fill="#b5c43a"/>
<rect x="211" y="636.00" width="46" height="25.00" fill="#7b716c"/>
<rect x="258" y="634.00" width="45" height="3.80" fill="#b5c43a"/>
<rect x="258" y="637.80" width="45" height="23.20" fill="#7b716c"/>
<rect x="304" y="631.00" width="46" height="4.00" fill="#b5c43a"/>
<rect x="304" y="635.00" width="46" height="26.00" fill="#7b716c"/>
<rect x="351" y="637.00" width="47" height="2.70" fill="#b5c43a"/>
<rect x="351" y="639.70" width="47" height="21.30" fill="#7b716c"/>
<rect x="398" y="634.80" width="45" height="3.00" fill="#b5c43a"/>
<rect x="398" y="637.80" width="45" height="23.20" fill="#7b716c"/>
<rect x="444" y="625.00" width="46" height="4.00" fill="#b5c43a"/>
<rect x="444" y="629.00" width="46" height="32.00" fill="#7b716c"/>
<rect x="491" y="629.90" width="45" height="3.00" fill="#b5c43a"/>
<rect x="491" y="632.90" width="45" height="28.10" fill="#7b716c"/>
<rect x="537" y="631.00" width="47" height="4.00" fill="#b5c43a"/>
<rect x="537" y="635.00" width="47" height="26.00" fill="#7b716c"/>
<rect x="584" y="632.90" width="46" height="3.00" fill="#b5c43a"/>
<rect x="584" y="635.90" width="46" height="25.10" fill="#7b716c"/>
<rect x="631" y="631.80" width="45" height="4.10" fill="#b5c43a"/>
<rect x="631" y="635.90" width="45" height="25.10" fill="#7b716c"/>
<line x1="111.5" y1="608" x2="111.5" y2="661.5" stroke="#000" stroke-width="1.2"/>
<line x1="683.5" y1="608" x2="683.5" y2="661.5" stroke="#000" stroke-width="1.2"/>
<line x1="102" y1="661.5" x2="683.5" y2="661.5" stroke="#000" stroke-width="1.2"/>
<line x1="102" y1="608.5" x2="111.5" y2="608.5" stroke="#000" stroke-width="1.2"/>
<line x1="102" y1="626.5" x2="111.5" y2="626.5" stroke="#000" stroke-width="1.2"/>
<line x1="102" y1="644.5" x2="111.5" y2="644.5" stroke="#000" stroke-width="1.2"/>
<line x1="140.5" y1="661" x2="140.5" y2="670.5" stroke="#000" stroke-width="1.2"/>
<line x1="186.5" y1="661" x2="186.5" y2="670.5" stroke="#000" stroke-width="1.2"/>
<line x1="233.5" y1="661" x2="233.5" y2="670.5" stroke="#000" stroke-width="1.2"/>
<line x1="280.5" y1="661" x2="280.5" y2="670.5" stroke="#000" stroke-width="1.2"/>
<line x1="326.5" y1="661" x2="326.5" y2="670.5" stroke="#000" stroke-width="1.2"/>
<line x1="373.5" y1="661" x2="373.5" y2="670.5" stroke="#000" stroke-width="1.2"/>
<line x1="420.5" y1="661" x2="420.5" y2="670.5" stroke="#000" stroke-width="1.2"/>
<line x1="466.5" y1="661" x2="466.5" y2="670.5" stroke="#000" stroke-width="1.2"/>
<line x1="513.5" y1="661" x2="513.5" y2="670.5" stroke="#000" stroke-width="1.2"/>
<line x1="560.5" y1="661" x2="560.5" y2="670.5" stroke="#000" stroke-width="1.2"/>
<line x1="607.5" y1="661" x2="607.5" y2="670.5" stroke="#000" stroke-width="1.2"/>
<line x1="653.5" y1="661" x2="653.5" y2="670.5" stroke="#000" stroke-width="1.2"/>
<text x="97" y="614" font-size="11" text-anchor="end" fill="#222" >300</text>
<text x="97" y="631" font-size="11" text-anchor="end" fill="#222" >200</text>
<text x="97" y="648.5" font-size="11" text-anchor="end" fill="#222" >100</text>
<text x="97" y="666" font-size="11" text-anchor="end" fill="#222" >0</text>
<text x="140.3" y="680" font-size="11" text-anchor="middle" fill="#222" >16:50</text>
<text x="280.31" y="680" font-size="11" text-anchor="middle" fill="#222" >17:05</text>
<text x="420.32" y="680" font-size="11" text-anchor="middle" fill="#222" >17:20</text>
<text x="560.33" y="680" font-size="11" text-anchor="middle" fill="#222" >17:35</text>
<text transform="translate(66.5,679) rotate(-90)" font-size="12" font-weight="bold" fill="#111" textLength="83" lengthAdjust="spacingAndGlyphs">Bit Rate (Kbps)</text>
<g clip-path="url(#c3)"><text transform="translate(691.5,585.5) rotate(90)" font-size="12" font-weight="bold" fill="#111">Packet Rate (pps)</text></g>
<rect x="217.00" y="701.00" width="16.00" height="12.00" fill="#7b716c"/>
<text x="238.2" y="712" font-size="12.5" text-anchor="start" fill="#222" textLength="41.9" lengthAdjust="spacingAndGlyphs">In Kbps</text>
<rect x="303.00" y="701.00" width="16.00" height="12.00" fill="#b5c43a"/>
<text x="324.2" y="712" font-size="12.5" text-anchor="start" fill="#222" textLength="50.5" lengthAdjust="spacingAndGlyphs">Out Kbps</text>
<rect x="398.00" y="701.00" width="16.00" height="12.00" fill="#808080"/>
<text x="419.2" y="712" font-size="12.5" text-anchor="start" fill="#8f8f8f" textLength="33.9" lengthAdjust="spacingAndGlyphs">In pps</text>
<rect x="476.00" y="701.00" width="16.00" height="12.00" fill="#808080"/>
<text x="497.2" y="712" font-size="12.5" text-anchor="start" fill="#8f8f8f" textLength="42.699999999999996" lengthAdjust="spacingAndGlyphs">Out pps</text>
<line x1="800.5" y1="608" x2="800.5" y2="661" stroke="#d8d8d8" stroke-width="1"/>
<line x1="850.5" y1="608" x2="850.5" y2="661" stroke="#d8d8d8" stroke-width="1"/>
<line x1="900.5" y1="608" x2="900.5" y2="661" stroke="#d8d8d8" stroke-width="1"/>
<line x1="949.5" y1="608" x2="949.5" y2="661" stroke="#d8d8d8" stroke-width="1"/>
<line x1="999.5" y1="608" x2="999.5" y2="661" stroke="#d8d8d8" stroke-width="1"/>
<line x1="1049.5" y1="608" x2="1049.5" y2="661" stroke="#d8d8d8" stroke-width="1"/>
<line x1="1099.5" y1="608" x2="1099.5" y2="661" stroke="#d8d8d8" stroke-width="1"/>
<line x1="1148.5" y1="608" x2="1148.5" y2="661" stroke="#d8d8d8" stroke-width="1"/>
<line x1="1198.5" y1="608" x2="1198.5" y2="661" stroke="#d8d8d8" stroke-width="1"/>
<line x1="1248.5" y1="608" x2="1248.5" y2="661" stroke="#d8d8d8" stroke-width="1"/>
<line x1="1298.5" y1="608" x2="1298.5" y2="661" stroke="#d8d8d8" stroke-width="1"/>
<line x1="1347.5" y1="608" x2="1347.5" y2="661" stroke="#d8d8d8" stroke-width="1"/>
<line x1="770.5" y1="608" x2="770.5" y2="661.5" stroke="#000" stroke-width="1.2"/>
<line x1="1378.5" y1="608" x2="1378.5" y2="661.5" stroke="#000" stroke-width="1.2"/>
<line x1="770" y1="661.5" x2="1378.5" y2="661.5" stroke="#000" stroke-width="1.2"/>
<line x1="800.5" y1="661" x2="800.5" y2="670.5" stroke="#000" stroke-width="1.2"/>
<line x1="850.5" y1="661" x2="850.5" y2="670.5" stroke="#000" stroke-width="1.2"/>
<line x1="900.5" y1="661" x2="900.5" y2="670.5" stroke="#000" stroke-width="1.2"/>
<line x1="949.5" y1="661" x2="949.5" y2="670.5" stroke="#000" stroke-width="1.2"/>
<line x1="999.5" y1="661" x2="999.5" y2="670.5" stroke="#000" stroke-width="1.2"/>
<line x1="1049.5" y1="661" x2="1049.5" y2="670.5" stroke="#000" stroke-width="1.2"/>
<line x1="1099.5" y1="661" x2="1099.5" y2="670.5" stroke="#000" stroke-width="1.2"/>
<line x1="1148.5" y1="661" x2="1148.5" y2="670.5" stroke="#000" stroke-width="1.2"/>
<line x1="1198.5" y1="661" x2="1198.5" y2="670.5" stroke="#000" stroke-width="1.2"/>
<line x1="1248.5" y1="661" x2="1248.5" y2="670.5" stroke="#000" stroke-width="1.2"/>
<line x1="1298.5" y1="661" x2="1298.5" y2="670.5" stroke="#000" stroke-width="1.2"/>
<line x1="1347.5" y1="661" x2="1347.5" y2="670.5" stroke="#000" stroke-width="1.2"/>
<text x="800.5" y="680" font-size="11" text-anchor="middle" fill="#222" >16:50</text>
<text x="949.75" y="680" font-size="11" text-anchor="middle" fill="#222" >17:05</text>
<text x="1099.0" y="680" font-size="11" text-anchor="middle" fill="#222" >17:20</text>
<text x="1248.25" y="680" font-size="11" text-anchor="middle" fill="#222" >17:35</text>
<text transform="translate(761.5,671) rotate(-90)" font-size="12" font-weight="bold" fill="#111">Min Window</text>
<text transform="translate(1386,597) rotate(90)" font-size="12" font-weight="bold" fill="#4572a7">Zero Window</text>
<rect x="880.00" y="701.00" width="16.00" height="12.00" fill="#808080"/>
<text x="901.2" y="712" font-size="12.5" text-anchor="start" fill="#8f8f8f" textLength="57.1" lengthAdjust="spacingAndGlyphs">Server Min</text>
<rect x="981.00" y="701.00" width="16.00" height="12.00" fill="#808080"/>
<text x="1002.2" y="712" font-size="12.5" text-anchor="start" fill="#8f8f8f" textLength="53.699999999999996" lengthAdjust="spacingAndGlyphs">Client Min</text>
<line x1="1079" y1="708" x2="1095" y2="708" stroke="#e8692d" stroke-width="2"/>
<circle cx="1087" cy="708" r="4.2" fill="#e8692d"/>
<text x="1100.2" y="712" font-size="12.5" text-anchor="start" fill="#222" textLength="62.7" lengthAdjust="spacingAndGlyphs">Server Zero</text>
<line x1="1186" y1="708" x2="1202" y2="708" stroke="#d04aa0" stroke-width="2"/>
<path d="M1194 703.6 L1198.4 708 L1194 712.4 L1189.6 708Z" fill="#d04aa0"/>
<text x="1207" y="712" font-size="12.5" text-anchor="start" fill="#222" textLength="60.2" lengthAdjust="spacingAndGlyphs">Client Zero</text>
<g fill="none" stroke="#c4c4c4" stroke-width="0.9">
<ellipse cx="74.7" cy="12" rx="6.6" ry="6.8"/>
<path d="M84.3 19 V5.2 L95.6 19 V5.2"/>
<path d="M106.8 5.5 H99.3 V18.6 H107 M99.3 12 H106.2"/>
</g>
<text x="107.6" y="7.6" font-size="3.6" fill="#bbb">TM</text>
<g fill="#fff">
<path d="M136.6 0 L136.6 0.6 L146.4 5.9 L151 3.4 L151 0 Z"/>
<path d="M136.6 5.5 L138.9 4.2 L146.4 8.3 L151.6 5.4 L153.9 6.7 L146.4 10.9 Z"/>
<path d="M136.6 10.4 L138.9 9.1 L146.4 13.3 L153.7 9.1 L156 10.4 L146.4 15.9 Z"/>
</g>
<circle cx="155.2" cy="1.9" r="6.4" fill="#3c4548"/>
<circle cx="155.2" cy="1.9" r="5.3" fill="#fff"/>
<path d="M152.6 0.6 H157.8 M155.2 -2 V3.4" stroke="#3c4548" stroke-width="1.7"/>
<rect x="257" y="-3" width="20.2" height="20.6" rx="4.2" fill="#3a8cb5"/>
<path d="M267 2.5 L268.2 6 L272 5 L269.4 8 L273 10.6 L268.8 10.4 L268.6 14 L266.4 11 L263.2 12.6 L264.6 9.2 L261.2 7.2 L265 6.8 Z" fill="#bfe2ef" opacity="0.55"/>
<path d="M259 5 L267.6 6.6 L266.2 9.8 Z" fill="#e3342a"/>
<path d="M266.2 9.8 L267.6 6.6 L276 10.6 Z" fill="#f4f8fa"/>
<path d="M432 5 L444.5 17.5 M444.5 5 L432 17.5" stroke="#fff" stroke-width="2.6"/>
<g fill="#8c8c8c"><rect x="1161" y="7" width="6" height="1.8"/><rect x="1161" y="10.2" width="8.8" height="1.8"/><rect x="1161" y="13.3" width="6" height="1.8"/></g>
<path d="M1169.6 6.6 L1177.6 15.4 M1177.6 6.6 L1169.6 15.4" stroke="#8c8c8c" stroke-width="2.4"/>
<circle cx="1231.2" cy="9.3" r="4.85" fill="none" stroke="#8a8a8a" stroke-width="2.6"/>
<path d="M1234.6 12.8 L1239 17.3" stroke="#8a8a8a" stroke-width="2.6" stroke-linecap="round"/>
<path d="M1416.27 9.72 L1418.01 9.77 L1418.01 12.03 L1416.27 12.08 L1415.56 13.79 L1416.76 15.06 L1415.16 16.66 L1413.89 15.46 L1412.18 16.17 L1412.13 17.91 L1409.87 17.91 L1409.82 16.17 L1408.11 15.46 L1406.84 16.66 L1405.24 15.06 L1406.44 13.79 L1405.73 12.08 L1403.99 12.03 L1403.99 9.77 L1405.73 9.72 L1406.44 8.01 L1405.24 6.74 L1406.84 5.14 L1408.11 6.34 L1409.82 5.63 L1409.87 3.89 L1412.13 3.89 L1412.18 5.63 L1413.89 6.34 L1415.16 5.14 L1416.76 6.74 L1415.56 8.01 Z M1414 10.9 A3 3 0 1 0 1408 10.9 A3 3 0 1 0 1414 10.9 Z" fill="#8a8a8a" fill-rule="evenodd"/>
<circle cx="283" cy="53.8" r="8" fill="#192f3e" stroke="#8a98a2" stroke-width="1"/>
<circle cx="762.5" cy="53.8" r="8" fill="#192f3e" stroke="#8a98a2" stroke-width="1"/>
<path d="M284.6 50.5 L281.4 53.8 L284.6 57.1" fill="none" stroke="#8a98a2" stroke-width="1.3"/>
<path d="M760.9 50.5 L764.1 53.8 L760.9 57.1" fill="none" stroke="#8a98a2" stroke-width="1.3"/>
<path d="M193 67 L198.5 67 L198.5 61.5 Z" fill="#fff"/>
<path d="M497 64.5 L503 64.5 L503 58.5 Z" fill="#fff"/>
<path d="M610.5 65.5 L616.5 65.5 L616.5 59.5 Z" fill="#fff"/>
<circle cx="1070.1" cy="53.8" r="3.85" fill="none" stroke="#fff" stroke-width="2.5"/>
<path d="M1073.2 57 L1076.4 60.3" stroke="#fff" stroke-width="2.6" stroke-linecap="round"/>
<circle cx="1096.7" cy="56.5" r="2.8" fill="none" stroke="#fff" stroke-width="1.6"/>
<path d="M1098.7 58.6 L1101.3 61.4" stroke="#fff" stroke-width="1.7" stroke-linecap="round"/>
<path d="M1096.5 49.6 A7.5 7.5 0 0 1 1104.4 58.8" fill="none" stroke="#fff" stroke-width="1.5"/>
<path d="M1093.6 49.6 L1097.5 46.8 L1097.5 52.2 Z" fill="#fff"/>
<path d="M1150 50 H1154.5 L1157.5 53 V54 M1150 50 V60 H1157.5 V58" fill="none" stroke="#fff" stroke-width="2.1"/>
<path d="M1154.5 56 H1159.5" stroke="#fff" stroke-width="2"/><path d="M1159 53 L1162.4 56 L1159 59 Z" fill="#fff"/>
<path d="M1176.7 49 V60.5 H1190" fill="none" stroke="#fff" stroke-width="1.3"/>
<path d="M1178.4 57 L1181.6 53.8 L1184.6 56.6 L1188.6 52.4" fill="none" stroke="#fff" stroke-width="1.9"/>
<path d="M1186 50.8 L1190 50.8 L1190 54.8 Z" fill="#fff"/>
<circle cx="1209.6" cy="53.4" r="5.5" fill="#fff"/>
<path d="M1213.0 56.8 L1217.3999999999999 61.199999999999996" stroke="#fff" stroke-width="2.6" stroke-linecap="round"/>
<path d="M1207.3999999999999 50.8 H1211.6 V56.199999999999996 H1207.3999999999999 Z M1205.8 53.4 H1213.1999999999998" fill="none" stroke="#192f3e" stroke-width="1"/>
<g fill="#fff"><rect x="1216.3999999999999" y="50.8" width="1.3" height="2"/><rect x="1216.3999999999999" y="53.8" width="1.3" height="2"/></g>
<circle cx="1266" cy="51.2" r="3.2" fill="#fff"/>
<path d="M1259 60.2 V58.5 Q1259 55.6 1263 55.6 H1266 Q1268.5 55.6 1269.5 57.5 L1270 60.2 Z" fill="#fff"/>
<path d="M1271.3 60.2 L1268.6 56.2 A3 3 0 1 1 1274 56.2 Z" fill="#fff" stroke="#192f3e" stroke-width="0.8"/>
<circle cx="1271.3" cy="54.7" r="1" fill="#192f3e"/>
<circle cx="1293.6" cy="54.6" r="6.3" fill="#fff"/><circle cx="1298.4" cy="53.4" r="4.3" fill="#192f3e"/>
<path d="M1298.80 50.30 L1299.65 52.43 L1301.94 52.58 L1300.18 54.05 L1300.74 56.27 L1298.80 55.05 L1296.86 56.27 L1297.42 54.05 L1295.66 52.58 L1297.95 52.43 Z" fill="#fff"/>
<path d="M1344.6 55 Q1351 47.2 1357.4 55 Q1351 62.8 1344.6 55 Z" fill="#fff"/>
<circle cx="1351" cy="55" r="2.5" fill="#192f3e"/><circle cx="1351" cy="55" r="1.1" fill="#fff"/>
<g fill="#fff">
<rect x="1374" y="49" width="1.2" height="4.8"/><rect x="1373" y="55" width="3.4" height="3"/><rect x="1374" y="59.2" width="1.2" height="1.8"/>
<rect x="1378" y="49" width="1.8" height="2.8"/><rect x="1377" y="53" width="3.8" height="3"/><rect x="1378" y="57.2" width="1.8" height="3.8"/>
<rect x="1383" y="49" width="1.2" height="6"/><rect x="1382" y="56.2" width="3.4" height="2.8"/><rect x="1383" y="60.2" width="1" height="1"/>
</g>
<g fill="#fff"><rect x="1401" y="49" width="12.2" height="2"/><rect x="1401" y="54" width="12.2" height="2"/><rect x="1401" y="59" width="12.2" height="2"/></g>
<g fill="#fff"><rect x="0" y="92.1" width="2.1" height="1.6"/><rect x="0" y="95.2" width="2.1" height="1.7"/><rect x="0" y="98.2" width="2.1" height="1.8"/>
<rect x="4" y="94.9" width="3.5" height="2.1"/><path d="M7 91 L12.2 96 L7 101.2 Z"/></g>
<path d="M-1 734.5 L3.8 728.2 L11.8 735.5 M10.6 734.5 V742 H0 M3.8 742 V737.5" fill="none" stroke="#fff" stroke-width="2"/>
<g fill="#9a9a9a"><rect x="50" y="324.6" width="2" height="10.8"/><path d="M60 324.6 V335.4 L53 330 Z"/><path d="M84.2 324.8 V335.2 L78.2 330 Z"/></g>
<g fill="#000"><path d="M198.6 324.8 V335.2 L205.2 330 Z"/><path d="M223 324.8 V335.2 L229.8 330 Z"/><rect x="230.6" y="324.6" width="2.2" height="10.8"/></g>
<path d="M343.8 117.8 L352.4 117.8 L348.1 113.8 Z" fill="#93b2d6"/><path d="M343.8 118.6 L352.4 118.6 L348.1 122.4 Z" fill="#2f6098"/>
<circle cx="634.4" cy="376.4" r="5.6" fill="#000"/>
<path d="M637.8 379.79999999999995 L642.0 384.0" stroke="#000" stroke-width="2.6" stroke-linecap="round"/>
<path d="M632.1999999999999 373.79999999999995 H636.4 V379.2 H632.1999999999999 Z M630.6 376.4 H638.0" fill="none" stroke="#f1f1f1" stroke-width="1"/>
<g fill="#000"><rect x="641.0" y="373.4" width="1.3" height="2"/><rect x="641.0" y="376.4" width="1.3" height="2"/></g>
<rect x="658.9" y="372" width="8.2" height="1.9" fill="#000"/>
<rect x="658.9" y="372" width="1.9" height="12" fill="#000"/>
<rect x="661.6" y="374.6" width="1.1" height="4.6" fill="#000"/>
<circle cx="667" cy="380" r="4.2" fill="#000"/>
<path d="M667 375.4 V380 H671.6" fill="none" stroke="#f1f1f1" stroke-width="0.9"/>
<path d="M659 383.4 L670 371.9" stroke="#f1f1f1" stroke-width="2.2"/>
<path d="M659 383.4 L670 371.9" stroke="#000" stroke-width="0.9"/>
<g fill="#000"><path d="M688 372 L692.2 372 L688 376.2 Z"/><path d="M689.5 373.5 L692.6 376.6" stroke="#000" stroke-width="1.3"/><path d="M700.2 372 L696.0 372 L700.2 376.2 Z"/><path d="M698.7 373.5 L695.6 376.6" stroke="#000" stroke-width="1.3"/><path d="M688 384 L692.2 384 L688 379.8 Z"/><path d="M689.5 382.5 L692.6 379.4" stroke="#000" stroke-width="1.3"/><path d="M700.2 384 L696.0 384 L700.2 379.8 Z"/><path d="M698.7 382.5 L695.6 379.4" stroke="#000" stroke-width="1.3"/></g>
<circle cx="1329.4" cy="376.4" r="5.6" fill="#000"/>
<path d="M1332.8000000000002 379.79999999999995 L1337.0 384.0" stroke="#000" stroke-width="2.6" stroke-linecap="round"/>
<path d="M1327.2 373.79999999999995 H1331.4 V379.2 H1327.2 Z M1325.6000000000001 376.4 H1333.0" fill="none" stroke="#f1f1f1" stroke-width="1"/>
<g fill="#000"><rect x="1336.0" y="373.4" width="1.3" height="2"/><rect x="1336.0" y="376.4" width="1.3" height="2"/></g>
<rect x="1353.9" y="372" width="8.2" height="1.9" fill="#000"/>
<rect x="1353.9" y="372" width="1.9" height="12" fill="#000"/>
<rect x="1356.6" y="374.6" width="1.1" height="4.6" fill="#000"/>
<circle cx="1362" cy="380" r="4.2" fill="#000"/>
<path d="M1362 375.4 V380 H1366.6" fill="none" stroke="#f1f1f1" stroke-width="0.9"/>
<path d="M1354 383.4 L1365 371.9" stroke="#f1f1f1" stroke-width="2.2"/>
<path d="M1354 383.4 L1365 371.9" stroke="#000" stroke-width="0.9"/>
<g fill="#000"><path d="M1383 372 L1387.2 372 L1383 376.2 Z"/><path d="M1384.5 373.5 L1387.6 376.6" stroke="#000" stroke-width="1.3"/><path d="M1395.2 372 L1391.0 372 L1395.2 376.2 Z"/><path d="M1393.7 373.5 L1390.6000000000001 376.6" stroke="#000" stroke-width="1.3"/><path d="M1383 384 L1387.2 384 L1383 379.8 Z"/><path d="M1384.5 382.5 L1387.6 379.4" stroke="#000" stroke-width="1.3"/><path d="M1395.2 384 L1391.0 384 L1395.2 379.8 Z"/><path d="M1393.7 382.5 L1390.6000000000001 379.4" stroke="#000" stroke-width="1.3"/></g>
<circle cx="634.4" cy="570.4" r="5.6" fill="#000"/>
<path d="M637.8 573.8 L642.0 578.0" stroke="#000" stroke-width="2.6" stroke-linecap="round"/>
<path d="M632.1999999999999 567.8 H636.4 V573.1999999999999 H632.1999999999999 Z M630.6 570.4 H638.0" fill="none" stroke="#f1f1f1" stroke-width="1"/>
<g fill="#000"><rect x="641.0" y="567.4" width="1.3" height="2"/><rect x="641.0" y="570.4" width="1.3" height="2"/></g>
<rect x="658.9" y="566" width="8.2" height="1.9" fill="#000"/>
<rect x="658.9" y="566" width="1.9" height="12" fill="#000"/>
<rect x="661.6" y="568.6" width="1.1" height="4.6" fill="#000"/>
<circle cx="667" cy="574" r="4.2" fill="#000"/>
<path d="M667 569.4 V574 H671.6" fill="none" stroke="#f1f1f1" stroke-width="0.9"/>
<path d="M659 577.4 L670 565.9" stroke="#f1f1f1" stroke-width="2.2"/>
<path d="M659 577.4 L670 565.9" stroke="#000" stroke-width="0.9"/>
<g fill="#000"><path d="M688 566 L692.2 566 L688 570.2 Z"/><path d="M689.5 567.5 L692.6 570.6" stroke="#000" stroke-width="1.3"/><path d="M700.2 566 L696.0 566 L700.2 570.2 Z"/><path d="M698.7 567.5 L695.6 570.6" stroke="#000" stroke-width="1.3"/><path d="M688 578 L692.2 578 L688 573.8 Z"/><path d="M689.5 576.5 L692.6 573.4" stroke="#000" stroke-width="1.3"/><path d="M700.2 578 L696.0 578 L700.2 573.8 Z"/><path d="M698.7 576.5 L695.6 573.4" stroke="#000" stroke-width="1.3"/></g>
<circle cx="1329.4" cy="570.4" r="5.6" fill="#000"/>
<path d="M1332.8000000000002 573.8 L1337.0 578.0" stroke="#000" stroke-width="2.6" stroke-linecap="round"/>
<path d="M1327.2 567.8 H1331.4 V573.1999999999999 H1327.2 Z M1325.6000000000001 570.4 H1333.0" fill="none" stroke="#f1f1f1" stroke-width="1"/>
<g fill="#000"><rect x="1336.0" y="567.4" width="1.3" height="2"/><rect x="1336.0" y="570.4" width="1.3" height="2"/></g>
<rect x="1353.9" y="566" width="8.2" height="1.9" fill="#000"/>
<rect x="1353.9" y="566" width="1.9" height="12" fill="#000"/>
<rect x="1356.6" y="568.6" width="1.1" height="4.6" fill="#000"/>
<circle cx="1362" cy="574" r="4.2" fill="#000"/>
<path d="M1362 569.4 V574 H1366.6" fill="none" stroke="#f1f1f1" stroke-width="0.9"/>
<path d="M1354 577.4 L1365 565.9" stroke="#f1f1f1" stroke-width="2.2"/>
<path d="M1354 577.4 L1365 565.9" stroke="#000" stroke-width="0.9"/>
<g fill="#000"><path d="M1383 566 L1387.2 566 L1383 570.2 Z"/><path d="M1384.5 567.5 L1387.6 570.6" stroke="#000" stroke-width="1.3"/><path d="M1395.2 566 L1391.0 566 L1395.2 570.2 Z"/><path d="M1393.7 567.5 L1390.6000000000001 570.6" stroke="#000" stroke-width="1.3"/><path d="M1383 578 L1387.2 578 L1383 573.8 Z"/><path d="M1384.5 576.5 L1387.6 573.4" stroke="#000" stroke-width="1.3"/><path d="M1395.2 578 L1391.0 578 L1395.2 573.8 Z"/><path d="M1393.7 576.5 L1390.6000000000001 573.4" stroke="#000" stroke-width="1.3"/></g>
</svg>
</body></html>
